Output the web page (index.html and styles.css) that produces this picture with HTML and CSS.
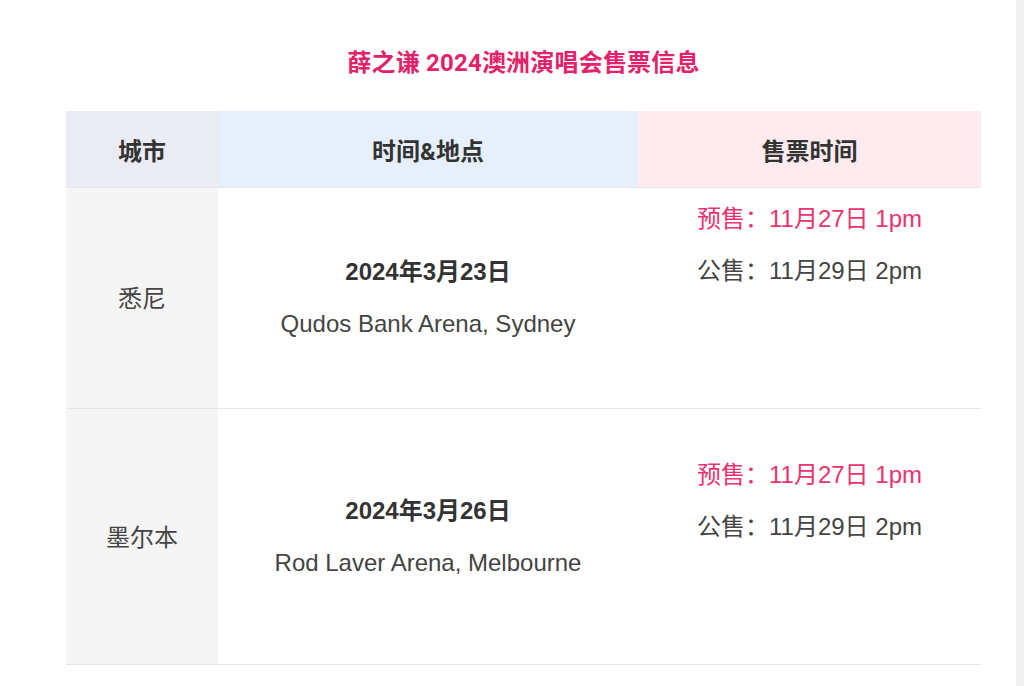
FILE: index.html
```html
<!DOCTYPE html>
<html lang="zh-CN">
<head>
<meta charset="utf-8">
<title>薛之谦 2024澳洲演唱会售票信息</title>
<link rel="stylesheet" href="styles.css">
</head>
<body>
<div class="page">
  <main class="content">
    <h1 class="title">薛之谦 2024澳洲演唱会售票信息</h1>
    <div class="table">
      <div class="row head">
        <div class="cell c1 h1c">城市</div>
        <div class="cell c2 h2c">时间&amp;地点</div>
        <div class="cell c3 h3c">售票时间</div>
      </div>
      <div class="row r1">
        <div class="cell c1 city">悉尼</div>
        <div class="cell c2 info">
          <p class="date">2024年3月23日</p>
          <p class="venue">Qudos Bank Arena, Sydney</p>
        </div>
        <div class="cell c3 sale sale-a">
          <p class="pre">预售：11月27日 1pm</p>
          <p class="pub">公售：11月29日 2pm</p>
        </div>
      </div>
      <div class="row r2">
        <div class="cell c1 city">墨尔本</div>
        <div class="cell c2 info">
          <p class="date">2024年3月26日</p>
          <p class="venue">Rod Laver Arena, Melbourne</p>
        </div>
        <div class="cell c3 sale sale-b">
          <p class="pre">预售：11月27日 1pm</p>
          <p class="pub">公售：11月29日 2pm</p>
        </div>
      </div>
    </div>
  </main>
  <div class="track"></div>
</div>
</body>
</html>
```

FILE: styles.css
```css
* { box-sizing: border-box; }
html, body { margin: 0; padding: 0; background: #fff; }
body {
  font-family: "Liberation Sans", Arial, "Noto Sans CJK SC", sans-serif;
  color: #444;
  overflow: hidden;
}
.page {
  display: flex;
  height: 686px;
}
.content {
  flex: 1;
  padding: 46px 35px 0 66px;
}
.track {
  width: 8px;
  background: #f1f1f1;
}
.title {
  margin: 0 0 30px;
  text-align: center;
  font-family: Roboto, "Noto Sans CJK SC", sans-serif;
  font-size: 24px;
  line-height: 35px;
  font-weight: 700;
  color: #e2226a;
  letter-spacing: 0.2px;
}
.table {
  width: 915px;
  display: flex;
  flex-direction: column;
}
.row {
  display: flex;
  border-bottom: 1px solid #e6e6e6;
}
.head { height: 77px; }
.r1 { height: 221px; }
.r2 { height: 256px; }
.cell {
  display: flex;
  flex-direction: column;
  align-items: center;
  justify-content: center;
  text-align: center;
}
.c1 { width: 152px; }
.c2 { width: 420px; }
.c3 { width: 343px; }
.head .cell {
  font-family: Roboto, "Noto Sans CJK SC", sans-serif;
  font-size: 24px;
  font-weight: 700;
  color: #333;
}
.h1c { background: #ebebf3; }
.h2c { background: #e6f0fd; }
.h3c { background: #fdebef; }
.city {
  background: #f5f5f5;
  font-size: 24px;
  color: #444;
  padding-bottom: 3px;
}
p { margin: 0; }
.info .date {
  font-size: 24px;
  font-weight: 700;
  color: #333;
  line-height: 30px;
}
.info .venue {
  font-size: 24px;
  color: #444;
  line-height: 30px;
  margin-top: 22px;
}
.sale {
  justify-content: flex-start;
}
.sale p {
  font-size: 24px;
  line-height: 30px;
}
.sale p + p { margin-top: 22px; }
.sale-a { padding-top: 16px; }
.sale-b { padding-top: 51px; }
.pre { color: #e8336f; }
.pub { color: #444; }
```
